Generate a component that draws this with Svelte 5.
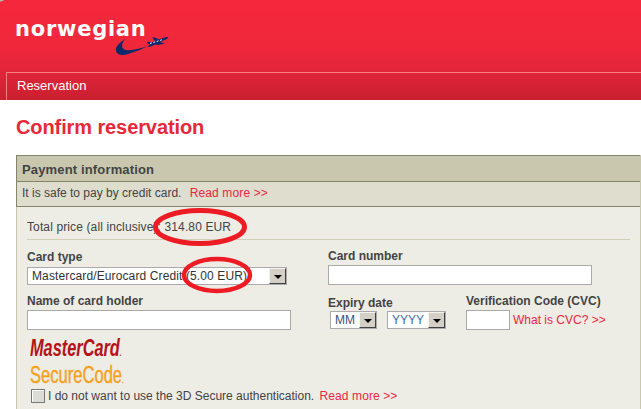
<script>
  const holder = 'Name of card holder';
</script>

<div class="page">
  <header class="top">
    <div class="logo">
      <span class="word">norwegian</span>
      <svg class="plane" viewBox="0 0 56 24" width="56" height="24" aria-hidden="true">
        <path d="M10 3 C4 7 0 11 1 15 C2 19 7 20 13 18 C20 16 27 13 33 10 C26 12 17 15 11 14 C6 13 6 8 10 3Z" fill="#0d2a6b"/>
        <path d="M32 7 L35 8.500 L32 11 L36 10.500 L40 8.500 L43 9 L50 7.500 L45 6 L52 3 L53.500 1 L49 1.500 L44 3.500 L40 1.500 L37 1.500 L40 5 L36 6.500 L33 5.500Z" fill="#0d2a6b"/>
        <path d="M35 7.500 L47 3.800" stroke="#dfe6f5" stroke-width="1" stroke-dasharray="2 1.500"/>
      </svg>
    </div>
    <nav class="nav"><span>Reservation</span></nav>
  </header>

  <h1>Confirm reservation</h1>

  <section class="panel">
    <h2>Payment information</h2>
    <p class="safe">It is safe to pay by credit card. <a href="#a">Read more &gt;&gt;</a></p>
    <div class="content">
      <p class="total">Total price (all inclusive): 314.80 EUR</p>
      <div class="form">
        <div class="left">
          <label class="card-label">Card type
            <span class="select wide"><span class="val">Mastercard/Eurocard Credit (5.00 EUR)</span><i class="btn"></i></span>
          </label>
          <label class="name-label">{holder}
            <input class="name" type="text" />
          </label>
          <div class="secure">
            <span class="mc">MasterCard<small>.</small></span>
            <span class="sc">SecureCode<small>.</small></span>
          </div>
        </div>
        <div class="right">
          <label class="number-label">Card number
            <input class="number" type="text" />
          </label>
          <div class="bottom">
            <div class="expiry">
              <span class="lab">Expiry date</span>
              <div class="dates">
                <span class="select mm"><span class="val">MM</span><i class="btn"></i></span>
                <span class="select yy"><span class="val">YYYY</span><i class="btn"></i></span>
              </div>
            </div>
            <div class="cvc">
              <span class="lab">Verification Code (CVC)</span>
              <div class="cvc-row"><input class="code" type="text" /><a href="#b">What is CVC? &gt;&gt;</a></div>
            </div>
          </div>
        </div>
      </div>
      <div class="check">
        <span class="box"></span>
        <span>I do not want to use the 3D Secure authentication. <a href="#c">Read more &gt;&gt;</a></span>
      </div>
    </div>
  </section>

  <svg class="marks" width="641" height="409" viewBox="0 0 641 409" aria-hidden="true">
    <ellipse cx="200" cy="227" rx="44.500" ry="16.500" stroke-width="5" />
    <ellipse cx="217" cy="275" rx="33" ry="16" stroke-width="4.500" />
  </svg>
  <span class="corner"></span>
</div>

<style>
  :global(body) { margin: 0; background: #fff; }
  .page {
    position: relative;
    width: 641px;
    height: 409px;
    overflow: hidden;
    font-family: "Liberation Sans", Arial, sans-serif;
    font-size: 12px;
    color: #333;
  }
  .top {
    height: 100px;
    box-sizing: border-box;
    padding-top: 10px;
    display: flex;
    flex-direction: column;
    justify-content: space-between;
    background: linear-gradient(#f5273c 0, #f0273b 45%, #e3253a 70%, #c9202f 100%);
  }
  .logo { position: relative; height: 50px; }
  .word {
    position: absolute;
    left: 15px;
    top: 8px;
    font-family: "DejaVu Sans", sans-serif;
    font-weight: 700;
    font-size: 21px;
    letter-spacing: 0.75px;
    color: #fff;
    line-height: 22px;
  }
  .plane { position: absolute; left: 115px; top: 26px; }
  .nav {
    height: 28px;
    margin-left: 6px;
    box-sizing: border-box;
    border-top: 1px solid #f77f7f;
    border-left: 1px solid #f77f7f;
    padding: 6px 0 0 10px;
    color: #fff;
    font-size: 13px;
    line-height: 14px;
  }
  h1 {
    margin: 16px 0 0 16px;
    height: 39px;
    font-size: 20px;
    line-height: 23px;
    font-weight: 700;
    letter-spacing: -0.1px;
    color: #e6283a;
  }
  .panel {
    margin-left: 16px;
    width: 625px;
    box-sizing: border-box;
    border-left: 1px solid #c9c8ae;
    border-right: 1px solid #c9c8ae;
    background: #edece5;
    height: 254px;
  }
  h2 {
    margin: 0 0 0 -1px;
    height: 27px;
    box-sizing: border-box;
    border: 1px solid #85856a;
    border-right: 0;
    background: #c9c8ae;
    font-size: 13px;
    letter-spacing: 0.15px;
    font-weight: 700;
    line-height: 27px;
    padding-left: 5px;
    color: #444;
  }
  .safe {
    margin: 0 0 0 -1px;
    height: 25px;
    box-sizing: border-box;
    border: 1px solid #85856a;
    border-width: 0 0 1px 1px;
    background: #dfddce;
    line-height: 23px;
    padding-left: 5px;
    color: #444;
  }
  a { color: #e8283f; text-decoration: none; }
  .safe a { margin-left: 5px; letter-spacing: 0.12px; }
  .content { padding: 0 0 0 10px; }
  .total {
    margin: 0;
    height: 33px;
    width: 603px;
    padding-top: 13px;
    box-sizing: border-box;
    border-bottom: 1px solid #cfceb8;
    line-height: 14px;
    letter-spacing: 0.12px;
    color: #444;
  }
  .form { display: flex; margin-top: 4px; height: 139px; }
  .left { width: 301px; }
  .right { flex: 1; }
  label, .lab {
    display: block;
    font-weight: 700;
    font-size: 12px;
    line-height: 14px;
    color: #444;
  }
  .card-label { padding-top: 6px; }
  .name-label { margin-top: 9px; }
  input {
    display: block;
    box-sizing: border-box;
    height: 20px;
    margin: 2px 0 0;
    padding: 0;
    border: 1px solid #aaa;
    border-radius: 0;
    background: #fff;
    outline: none;
  }
  .name { width: 264px; }
  .number { width: 264px; margin-top: 2px; }
  .code { width: 44px; margin: 0; }
  .number-label { padding-top: 5px; }
  .select {
    display: flex;
    align-items: center;
    box-sizing: border-box;
    height: 18px;
    border: 1px solid #aaa;
    background: #fff;
    font-weight: 400;
    color: #333;
    justify-content: space-between;
  }
  .wide { width: 260px; margin-top: 3px; }
  .wide .val { letter-spacing: 0.12px; }
  .val { padding-left: 4px; white-space: nowrap; line-height: 14px; }
  .btn {
    position: relative;
    width: 17px;
    height: 16px;
    box-sizing: border-box;
    background: #d4d0c8;
    border: 1px solid;
    border-color: #f4f3ee #404040 #404040 #f4f3ee;
    flex: none;
  }
  .btn::after {
    content: "";
    position: absolute;
    left: 4px;
    top: 6px;
    border: 4px solid transparent;
    border-top-color: #000;
    border-bottom: 0;
  }
  .bottom { display: flex; }
  .expiry { width: 138px; padding-top: 11px; box-sizing: border-box; }
  .dates { display: flex; gap: 10px; margin: 1px 0 0 2px; }
  .mm { width: 47px; }
  .yy { width: 59px; }
  .yy .val { color: #3a6ea5; }
  .mm .val { color: #36557a; }
  .cvc { padding-top: 9px; }
  .cvc-row { display: flex; align-items: center; margin-top: 2px; }
  .cvc-row a { margin-left: 3px; }
  .secure {
    display: flex;
    flex-direction: column;
    margin: 7px 0 0 3px;
    font-weight: 700;
    font-style: italic;
    font-size: 23px;
    line-height: 22px;
  }
  .mc, .sc { display: block; transform-origin: 0 50%; white-space: nowrap; }
  .mc { color: #b5121b; transform: scaleX(0.71); }
  .sc { color: #f6a11c; font-style: normal; font-weight: 400; -webkit-text-stroke: 0.4px #f6a11c; transform: scaleX(0.72); }
  .secure small { font-size: 9px; }
  .check {
    display: flex;
    align-items: center;
    gap: 3px;
    margin: 6px 0 0 4px;
    line-height: 14px;
    color: #444;
    white-space: nowrap;
  }
  .check a { margin-left: 2px; letter-spacing: 0.1px; }
  .box {
    width: 14px;
    height: 14px;
    box-sizing: border-box;
    border: 1px solid #777;
    background: #dcdcd6;
    box-shadow: inset 1px 1px 0 #fff;
  }
  .marks { position: absolute; left: 0; top: 0; pointer-events: none; }
  .marks ellipse { fill: none; stroke: #ed1c24; }
  .corner {
    position: absolute;
    left: -10px;
    top: -10px;
    width: 16px;
    height: 12px;
    border-radius: 50%;
    background: #b9b9a8;
  }
</style>
